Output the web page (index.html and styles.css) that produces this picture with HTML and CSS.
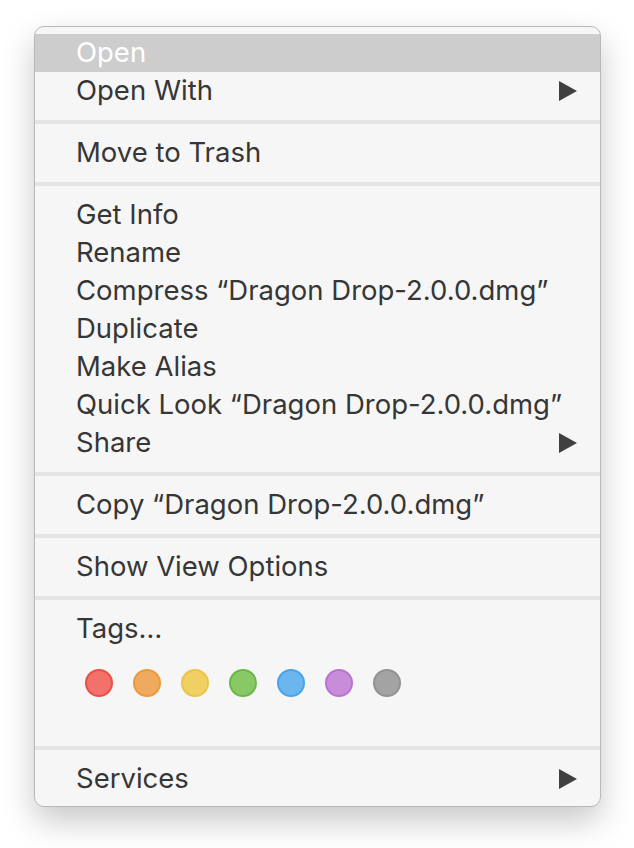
FILE: index.html
```html
<!DOCTYPE html>
<html>
<head>
<meta charset="utf-8">
<link rel="stylesheet" href="styles.css">
</head>
<body>
<div class="menu">
  <div class="item active"><span>Open</span></div>
  <div class="item"><span>Open With</span><span class="arrow"></span></div>
  <div class="sep"></div>
  <div class="item"><span>Move to Trash</span></div>
  <div class="sep"></div>
  <div class="item"><span>Get Info</span></div>
  <div class="item"><span>Rename</span></div>
  <div class="item"><span>Compress “Dragon Drop-2.0.0.dmg”</span></div>
  <div class="item"><span>Duplicate</span></div>
  <div class="item"><span>Make Alias</span></div>
  <div class="item"><span>Quick Look “Dragon Drop-2.0.0.dmg”</span></div>
  <div class="item"><span>Share</span><span class="arrow"></span></div>
  <div class="sep"></div>
  <div class="item"><span>Copy “Dragon Drop-2.0.0.dmg”</span></div>
  <div class="sep"></div>
  <div class="item"><span>Show View Options</span></div>
  <div class="sep"></div>
  <div class="item"><span>Tags…</span></div>
  <div class="tags">
    <span class="tag red"></span>
    <span class="tag orange"></span>
    <span class="tag yellow"></span>
    <span class="tag green"></span>
    <span class="tag blue"></span>
    <span class="tag purple"></span>
    <span class="tag gray"></span>
  </div>
  <div class="sep"></div>
  <div class="item"><span>Services</span><span class="arrow"></span></div>
</div>
</body>
</html>
```

FILE: styles.css
```css
html, body {
  margin: 0;
  background: #ffffff;
}
body {
  box-sizing: border-box;
  min-height: 848px;
  padding: 26px 0 0 34px;
  font-family: Inter, "Liberation Sans", sans-serif;
}
.menu {
  box-sizing: border-box;
  width: 567px;
  height: 781px;
  background: #f6f6f6;
  border: 1px solid #b8b8b8;
  border-radius: 10px;
  padding: 7px 0 8px;
  box-shadow: 0 14px 32px rgba(0,0,0,0.22);
  overflow: hidden;
}
.item {
  height: 38px;
  display: flex;
  align-items: center;
  justify-content: space-between;
  padding: 0 23px 0 41px;
  font-size: 27.5px;
  line-height: 38px;
  color: #363636;
}
.item span:first-child {
  position: relative;
  top: -1px;
}
.item.active {
  background: #cdcdcd;
  color: #ffffff;
}
.arrow {
  width: 0;
  height: 0;
  border-top: 10px solid transparent;
  border-bottom: 10px solid transparent;
  border-left: 18px solid #404040;
}
.sep {
  height: 4px;
  background: #e4e4e4;
  margin: 10px 0;
}
.tags {
  height: 88px;
  box-sizing: border-box;
  padding: 21px 0 0 50px;
  display: flex;
  gap: 20px;
}
.tag {
  width: 28px;
  height: 28px;
  box-sizing: border-box;
  border-radius: 50%;
  border: 2px solid;
}
.red { background: #f2716a; border-color: #ec4f45; }
.orange { background: #efaa5f; border-color: #ec9a3b; }
.yellow { background: #f0cf63; border-color: #ecc447; }
.green { background: #88c866; border-color: #6ab848; }
.blue { background: #6bb6ef; border-color: #4aa4ec; }
.purple { background: #c78dd9; border-color: #b872d2; }
.gray { background: #a3a3a3; border-color: #929292; }
```
